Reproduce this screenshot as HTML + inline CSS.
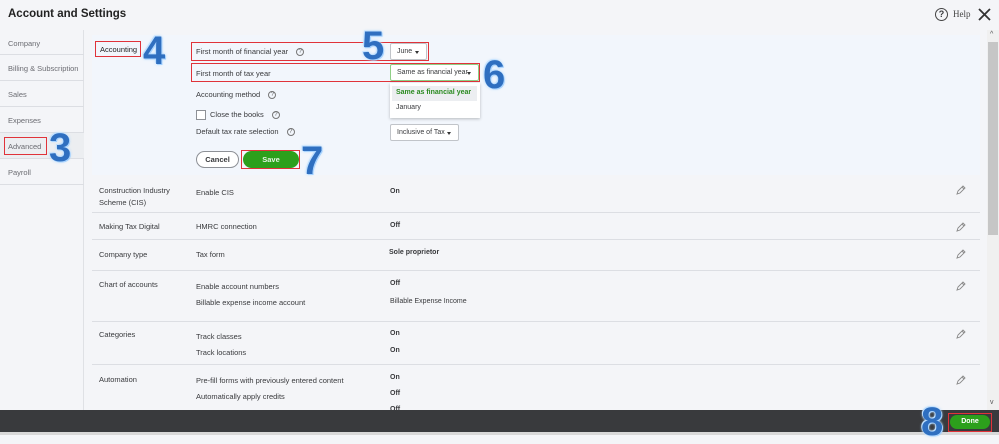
<!DOCTYPE html>
<html><head><style>
*{margin:0;padding:0;box-sizing:border-box}
body{width:999px;height:435px;overflow:hidden;background:#f4f5f8;font-family:"Liberation Sans",sans-serif;color:#393a3d;position:relative;font-size:7.5px}
.a{position:absolute;white-space:nowrap}
.hr{position:absolute;height:1px;background:#dcdee3}
.red{position:absolute;border:1px solid #e0333a}
.num{position:absolute;font-size:40px;font-weight:bold;color:#2f6fc0;text-shadow:0 0 3px #9fd0ff,0 0 2px #fff,1px 1px 0 #8ec6ff,-1px -1px 0 #bfe0ff;line-height:1}
.sel{position:absolute;background:#fff;border:1px solid #c1c4c9;border-radius:2px;font-size:7px;padding-left:6px;white-space:nowrap;overflow:hidden}
.ar{position:absolute;right:7px;top:7px;width:0;height:0;border-left:2.5px solid transparent;border-right:2.5px solid transparent;border-top:3px solid #333}
.q{display:inline-block;width:8px;height:8px;border:1px solid #777;border-radius:50%;font-size:6px;text-align:center;line-height:6px;margin-left:6px;vertical-align:middle;color:#666}
.pen{position:absolute;left:956px;width:10px;height:10px}
</style></head><body>
<div class="a" style="left:0;top:0;width:999px;height:30px;background:#f4f5f8"></div>
<div class="a" style="left:8px;top:8px;font-size:11.5px;font-weight:bold;color:#222">Account and Settings</div>
<div class="a" style="left:935px;top:8px;width:13px;height:13px;border:1.5px solid #444;border-radius:50%;font-size:9px;font-weight:bold;text-align:center;line-height:10px">?</div>
<div class="a" style="left:953px;top:9px;font-family:'Liberation Serif',serif;font-size:9px;color:#444">Help</div>
<svg class="a" style="left:977px;top:7px" width="15" height="15"><path d="M2 2L13 13M13 2L2 13" stroke="#333" stroke-width="1.8"/></svg>
<!-- sidebar -->
<div class="a" style="left:0;top:30px;width:84px;height:380px;background:#f4f5f8;border-right:1px solid #dfe1e5"></div>
<div class="a" style="left:8px;top:39px;color:#6b6c72">Company</div>
<div class="hr" style="left:0;top:54px;width:84px"></div>
<div class="a" style="left:8px;top:64px;color:#6b6c72">Billing &amp; Subscription</div>
<div class="hr" style="left:0;top:80px;width:84px"></div>
<div class="a" style="left:8px;top:90px;color:#6b6c72">Sales</div>
<div class="hr" style="left:0;top:106px;width:84px"></div>
<div class="a" style="left:8px;top:116px;color:#6b6c72">Expenses</div>
<div class="hr" style="left:0;top:132px;width:84px"></div>
<div class="a" style="left:0;top:133px;width:84px;height:25px;background:#eceef1"></div>
<div class="a" style="left:8px;top:142px;color:#6b6c72">Advanced</div>
<div class="red" style="left:4px;top:137px;width:43px;height:18px"></div>
<div class="hr" style="left:0;top:158px;width:84px"></div>
<div class="a" style="left:8px;top:168px;color:#6b6c72">Payroll</div>
<div class="hr" style="left:0;top:184px;width:84px"></div>
<div class="num" style="left:49px;top:128px">3</div>
<!-- accounting box -->
<div class="a" style="left:92px;top:35px;width:888px;height:140px;background:#f2f6fc"></div>
<div class="a" style="left:100px;top:45px;color:#222">Accounting</div>
<div class="red" style="left:95px;top:41px;width:46px;height:16px"></div>
<div class="num" style="left:143px;top:31px">4</div>
<div class="a" style="left:196px;top:47px">First month of financial year <span class="q">?</span></div>
<div class="red" style="left:191px;top:42px;width:238px;height:19px"></div>
<div class="sel" style="left:390px;top:43px;width:37px;height:17px;line-height:15px">June<i class="ar"></i></div>
<div class="num" style="left:362px;top:26px">5</div>
<div class="a" style="left:196px;top:69px">First month of tax year</div>
<div class="sel" style="left:390px;top:64px;width:89px;height:17px;line-height:15px;border-color:#8fcf86">Same as financial year<i class="ar"></i></div>
<div class="red" style="left:191px;top:63px;width:289px;height:19px"></div>
<div class="num" style="left:483px;top:55px">6</div>
<div class="a" style="left:390px;top:83px;width:90px;height:35px;background:#fff;box-shadow:0 1px 3px rgba(0,0,0,.25)"></div>
<div class="a" style="left:392px;top:86px;width:85px;height:15px;background:#eceef1"></div>
<div class="a" style="left:396px;top:89px;color:#2a8a20;font-weight:bold;font-size:7px">Same as financial year</div>
<div class="a" style="left:396px;top:104px;font-size:7px">January</div>
<div class="a" style="left:196px;top:90px">Accounting method <span class="q">?</span></div>
<div class="a" style="left:196px;top:110px;width:10px;height:10px;border:1px solid #8d9096;background:#fff"></div>
<div class="a" style="left:210px;top:110px">Close the books <span class="q">?</span></div>
<div class="a" style="left:196px;top:127px">Default tax rate selection <span class="q">?</span></div>
<div class="sel" style="left:390px;top:124px;width:69px;height:17px;line-height:15px">Inclusive of Tax<i class="ar"></i></div>
<div class="a" style="left:196px;top:151px;width:43px;height:17px;border:1px solid #8d9096;border-radius:9px;background:#fff;text-align:center;line-height:15px;font-weight:bold">Cancel</div>
<div class="a" style="left:243px;top:151px;width:56px;height:17px;border-radius:9px;background:#2ca01c;color:#e8f5e6;text-align:center;line-height:17px;font-weight:bold">Save</div>
<div class="red" style="left:241px;top:150px;width:59px;height:19px"></div>
<div class="num" style="left:301px;top:141px">7</div>
<!-- rows -->
<div class="a" style="left:99px;top:185px;line-height:12px">Construction Industry<br>Scheme (CIS)</div>
<div class="a" style="left:196px;top:188px">Enable CIS</div>
<div class="a" style="left:390px;top:188px;font-weight:bold;font-size:7px">On</div>
<svg class="pen" style="top:185px" viewBox="0 0 10 10"><path d="M1 9L2 6L7 1L9 3L4 8Z M6 2L8 4" fill="none" stroke="#888" stroke-width=".9"/></svg>
<div class="hr" style="left:92px;top:212px;width:888px"></div>
<div class="a" style="left:99px;top:222px">Making Tax Digital</div>
<div class="a" style="left:196px;top:222px">HMRC connection</div>
<div class="a" style="left:390px;top:222px;font-weight:bold;font-size:7px">Off</div>
<svg class="pen" style="top:222px" viewBox="0 0 10 10"><path d="M1 9L2 6L7 1L9 3L4 8Z M6 2L8 4" fill="none" stroke="#888" stroke-width=".9"/></svg>
<div class="hr" style="left:92px;top:239px;width:888px"></div>
<div class="a" style="left:99px;top:250px">Company type</div>
<div class="a" style="left:196px;top:250px">Tax form</div>
<div class="a" style="left:389px;top:249px;font-weight:bold;font-size:7px">Sole proprietor</div>
<svg class="pen" style="top:249px" viewBox="0 0 10 10"><path d="M1 9L2 6L7 1L9 3L4 8Z M6 2L8 4" fill="none" stroke="#888" stroke-width=".9"/></svg>
<div class="hr" style="left:92px;top:270px;width:888px"></div>
<div class="a" style="left:99px;top:280px">Chart of accounts</div>
<div class="a" style="left:196px;top:282px">Enable account numbers</div>
<div class="a" style="left:390px;top:280px;font-weight:bold;font-size:7px">Off</div>
<div class="a" style="left:196px;top:298px">Billable expense income account</div>
<div class="a" style="left:390px;top:298px;font-size:7px">Billable Expense Income</div>
<svg class="pen" style="top:281px" viewBox="0 0 10 10"><path d="M1 9L2 6L7 1L9 3L4 8Z M6 2L8 4" fill="none" stroke="#888" stroke-width=".9"/></svg>
<div class="hr" style="left:92px;top:321px;width:888px"></div>
<div class="a" style="left:99px;top:330px">Categories</div>
<div class="a" style="left:196px;top:332px">Track classes</div>
<div class="a" style="left:390px;top:330px;font-weight:bold;font-size:7px">On</div>
<div class="a" style="left:196px;top:348px">Track locations</div>
<div class="a" style="left:390px;top:347px;font-weight:bold;font-size:7px">On</div>
<svg class="pen" style="top:329px" viewBox="0 0 10 10"><path d="M1 9L2 6L7 1L9 3L4 8Z M6 2L8 4" fill="none" stroke="#888" stroke-width=".9"/></svg>
<div class="hr" style="left:92px;top:364px;width:888px"></div>
<div class="a" style="left:99px;top:375px">Automation</div>
<div class="a" style="left:196px;top:376px">Pre-fill forms with previously entered content</div>
<div class="a" style="left:390px;top:374px;font-weight:bold;font-size:7px">On</div>
<div class="a" style="left:196px;top:392px">Automatically apply credits</div>
<div class="a" style="left:390px;top:390px;font-weight:bold;font-size:7px">Off</div>
<div class="a" style="left:390px;top:406px;font-weight:bold;font-size:7px">Off</div>
<svg class="pen" style="top:375px" viewBox="0 0 10 10"><path d="M1 9L2 6L7 1L9 3L4 8Z M6 2L8 4" fill="none" stroke="#888" stroke-width=".9"/></svg>
<!-- scrollbar -->
<div class="a" style="left:987px;top:30px;width:12px;height:380px;background:#f0f0f0"></div>
<div class="a" style="left:988px;top:42px;width:10px;height:193px;background:#c6c6c6"></div>
<div class="a" style="left:990px;top:31px;font-size:7px;color:#555">^</div>
<div class="a" style="left:990px;top:399px;font-size:7px;color:#555">v</div>
<!-- bottom bar -->
<div class="a" style="left:0;top:410px;width:999px;height:22px;background:#393a3d"></div>
<div class="a" style="left:0;top:432px;width:999px;height:3px;background:#d8d8d8"></div>
<div class="a" style="left:950px;top:415px;width:40px;height:14px;border-radius:8px;background:#2ca01c;color:#fff;font-weight:bold;font-size:7px;text-align:center;line-height:14px">Done</div>
<div class="red" style="left:948px;top:413px;width:44px;height:19px"></div>
<div class="num" style="left:921px;top:402px">8</div>
</body></html>
